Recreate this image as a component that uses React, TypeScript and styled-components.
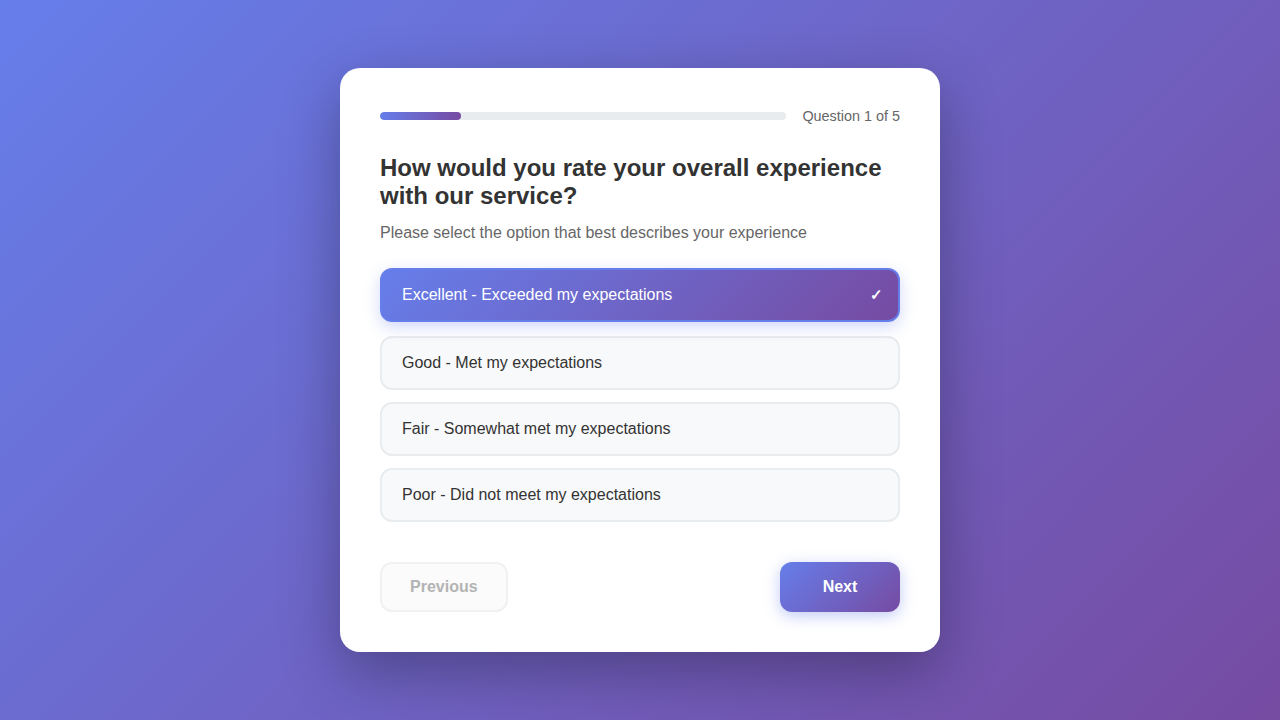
import React, { useState } from "react";
import styled, { createGlobalStyle } from "styled-components";

const GlobalStyle = createGlobalStyle`
  * { box-sizing: border-box; }
  html, body { margin: 0; padding: 0; }
  body {
    font-family: "Liberation Sans", Arial, sans-serif;
    background: linear-gradient(135deg, #667eea 0%, #764ba2 100%);
    min-height: 100vh;
  }
`;

const Page = styled.div`
  min-height: 100vh;
  display: flex;
  align-items: center;
  justify-content: center;
`;

const Card = styled.div`
  width: 600px;
  background: #ffffff;
  border-radius: 20px;
  padding: 40px;
  box-shadow: 0 20px 60px rgba(0, 0, 0, 0.3);
`;

const ProgressRow = styled.div`
  display: flex;
  align-items: center;
  gap: 16px;
  height: 16px;
  margin-bottom: 30px;
`;

const Track = styled.div`
  flex: 1;
  height: 8px;
  background: #e9ecef;
  border-radius: 4px;
  overflow: hidden;
`;

const Fill = styled.div`
  height: 100%;
  border-radius: 4px;
  background: linear-gradient(90deg, #667eea, #764ba2);
`;

const Counter = styled.span`
  font-size: 14.4px;
  color: #666;
  white-space: nowrap;
`;

const Title = styled.h2`
  margin: 0 0 14px;
  font-size: 24px;
  line-height: 28px;
  font-weight: 700;
  color: #333;
`;

const Subtitle = styled.p`
  margin: 0 0 28px;
  font-size: 16px;
  line-height: 18px;
  color: #666;
`;

const Options = styled.div`
  display: flex;
  flex-direction: column;
  gap: 12px;
`;

const Option = styled.button<{ $selected: boolean }>`
  display: flex;
  align-items: center;
  justify-content: space-between;
  width: 100%;
  height: 54px;
  padding: 0 15px 0 20px;
  border-radius: 12px;
  font-family: inherit;
  font-size: 16px;
  text-align: left;
  cursor: pointer;
  border: 2px solid ${(p) => (p.$selected ? "#667eea" : "#e9ecef")};
  background: ${(p) =>
    p.$selected ? "linear-gradient(135deg, #667eea 0%, #764ba2 100%)" : "#f8f9fa"};
  color: ${(p) => (p.$selected ? "#ffffff" : "#333")};
  box-shadow: ${(p) => (p.$selected ? "0 5px 15px rgba(102, 126, 234, 0.3)" : "none")};
  transform: ${(p) => (p.$selected ? "translateY(-2px)" : "none")};
`;

const Check = styled.span`
  font-weight: 700;
  font-size: 15px;
  color: #fff;
`;

const Footer = styled.div`
  display: flex;
  justify-content: space-between;
  align-items: center;
  margin-top: 40px;
`;

const NavButton = styled.button<{ $primary?: boolean }>`
  height: 50px;
  min-width: 120px;
  padding: 0 28px;
  border-radius: 12px;
  font-family: inherit;
  font-size: 16px;
  font-weight: 700;
  cursor: pointer;
  border: ${(p) => (p.$primary ? "none" : "2px solid #f1f1f3")};
  background: ${(p) =>
    p.$primary ? "linear-gradient(135deg, #667eea 0%, #764ba2 100%)" : "#fbfbfc"};
  color: ${(p) => (p.$primary ? "#ffffff" : "#b3b3b3")};
  box-shadow: ${(p) => (p.$primary ? "0 4px 15px rgba(102, 126, 234, 0.4)" : "none")};
`;

const options = [
  "Excellent - Exceeded my expectations",
  "Good - Met my expectations",
  "Fair - Somewhat met my expectations",
  "Poor - Did not meet my expectations",
];

export default function App() {
  const [selected, setSelected] = useState(0);
  return (
    <>
      <GlobalStyle />
      <Page>
        <Card>
          <ProgressRow>
            <Track>
              <Fill style={{ width: "20%" }} />
            </Track>
            <Counter>Question 1 of 5</Counter>
          </ProgressRow>
          <Title>How would you rate your overall experience with our service?</Title>
          <Subtitle>Please select the option that best describes your experience</Subtitle>
          <Options>
            {options.map((o, i) => (
              <Option key={o} $selected={selected === i} onClick={() => setSelected(i)}>
                <span>{o}</span>
                {selected === i && <Check>✓</Check>}
              </Option>
            ))}
          </Options>
          <Footer>
            <NavButton disabled>Previous</NavButton>
            <NavButton $primary>Next</NavButton>
          </Footer>
        </Card>
      </Page>
    </>
  );
}
